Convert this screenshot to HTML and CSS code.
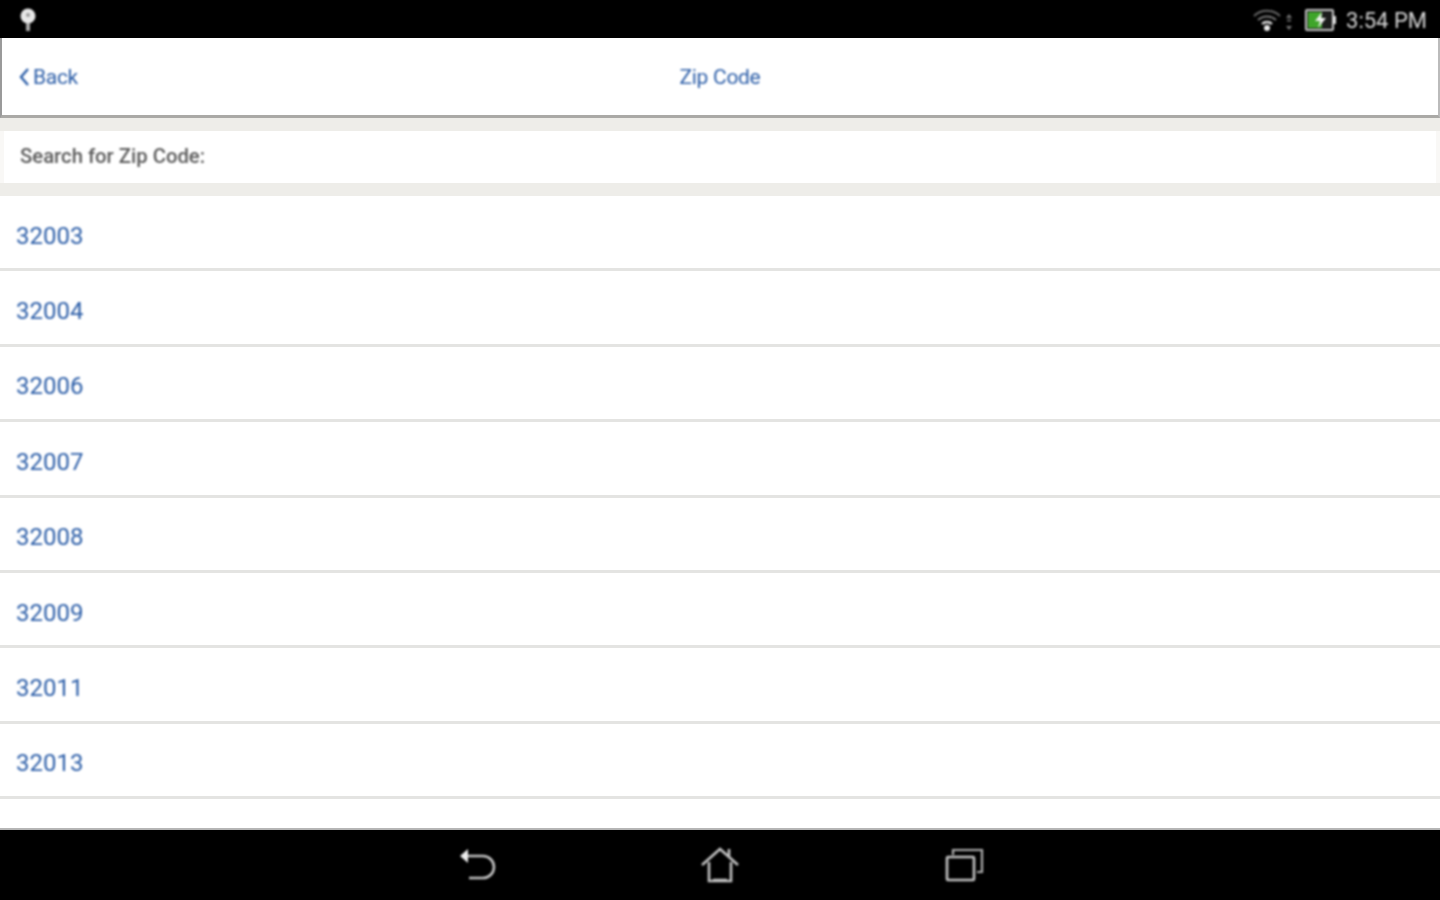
FILE: index.html
```html
<!DOCTYPE html>
<html lang="en">
<head>
  <meta charset="UTF-8">
  <title>Zip Code</title>
  <link rel="stylesheet" href="styles.css">
</head>
<body>

<!-- Status bar -->
<div class="status-bar">
  <svg class="status-pin soft" width="20" height="28" viewBox="0 0 20 28">
    <circle cx="10" cy="10" r="7.5" fill="#e8e8e8"/>
    <circle cx="10" cy="9" r="2" fill="#999"/>
    <rect x="8" y="17" width="4" height="8" fill="#aaa"/>
  </svg>
  <div class="status-right">
    <svg class="status-wifi soft" width="44" height="26" viewBox="0 0 44 26" fill="none">
      <path d="M2 9 A19 19 0 0 1 28 9" stroke="#666" stroke-width="2"/>
      <path d="M6 13 A13 13 0 0 1 24 13" stroke="#777" stroke-width="2"/>
      <path d="M10 17 A7 7 0 0 1 20 17" stroke="#ddd" stroke-width="2.5"/>
      <circle cx="15" cy="21" r="3" fill="#eee"/>
      <path d="M37 7 L40 11 H34 Z M37 23 L40 19 H34 Z" fill="#777"/>
      <rect x="35" y="12.5" width="4" height="2" fill="#666"/>
    </svg>
    <svg class="status-battery soft" width="32" height="22" viewBox="0 0 32 22">
      <rect x="1" y="1" width="27" height="20" rx="1" fill="#1c1c1c" stroke="#c8c8c8" stroke-width="2"/>
      <rect x="3" y="3" width="14" height="16" fill="#3fa52a"/>
      <path d="M17 3 L10 12 H15 L13 19 L21 9 H16 Z" fill="#f2f2f2"/>
      <rect x="28" y="7" width="3" height="8" fill="#ddd"/>
    </svg>
    <span class="status-time soft">3:54 PM</span>
  </div>
</div>

<!-- Header -->
<div class="header">
  <a class="back soft">
    <svg width="12" height="20" viewBox="0 0 12 20" fill="none">
      <path d="M10 2 L3 10 L10 18" stroke="#2c5ea8" stroke-width="2.4"/>
    </svg>
    Back
  </a>
  <div class="title soft">Zip Code</div>
</div>

<div class="search-wrap">
  <div class="search-label"><span class="soft">Search for Zip Code:</span></div>
</div>

<!-- Zip list -->
<ul class="zip-list">
  <li><span class="soft">32003</span></li>
  <li><span class="soft">32004</span></li>
  <li><span class="soft">32006</span></li>
  <li><span class="soft">32007</span></li>
  <li><span class="soft">32008</span></li>
  <li><span class="soft">32009</span></li>
  <li><span class="soft">32011</span></li>
  <li><span class="soft">32013</span></li>
</ul>

<!-- Nav bar -->
<div class="nav-bar">
  <svg class="nav-back soft" width="40" height="36" viewBox="0 0 40 36" fill="none">
    <path d="M4 9 H24 A11 11 0 0 1 24 31 H10" stroke="#c4c4c4" stroke-width="2.6"/>
    <path d="M1 9 L9 2 V16 Z" fill="#eee"/>
  </svg>
  <svg class="soft" width="40" height="40" viewBox="0 0 40 40" fill="none">
    <path d="M2 20 L20 4 L38 20 M29 11 V4" stroke="#c4c4c4" stroke-width="2.6"/>
    <path d="M9 17 V36 H31 V17 M13 35 H27" stroke="#c4c4c4" stroke-width="2.6"/>
  </svg>
  <svg class="soft" width="40" height="36" viewBox="0 0 40 36" fill="none">
    <rect x="2" y="10" width="27" height="23" rx="1" stroke="#c4c4c4" stroke-width="2.6"/>
    <path d="M8 8 V3 H37 V25 H32" stroke="#b0b0b0" stroke-width="2.2"/>
  </svg>
</div>

</body>
</html>
```

FILE: styles.css
```css
html, body {
  height: 100%;
}

body {
  margin: 0;
  font-family: Roboto, 'Liberation Sans', sans-serif;
  background: #fff;
  display: flex;
  flex-direction: column;
  height: 900px;
  overflow: hidden;
}

/* the reference is an upscaled capture, so text and icons are a bit soft */
.soft {
  filter: blur(0.8px);
}

.status-bar {
  height: 38px;
  flex: none;
  background: #000;
  display: flex;
  align-items: center;
  justify-content: space-between;
  padding: 0 13px 0 18px;
}

.status-pin {
  margin-top: 2px;
}

.status-right {
  display: flex;
  align-items: center;
}

.status-wifi {
  margin-right: 9px;
  margin-top: 2px;
}

.status-battery {
  margin-right: 9px;
  margin-top: 1px;
}

.status-time {
  color: #d4d4d4;
  font-size: 22px;
  margin-top: 2px;
}

.header {
  height: 77px;
  flex: none;
  display: flex;
  align-items: center;
  justify-content: center;
  position: relative;
  border-left: 2px solid #9a9a9a;
  border-right: 2px solid #bbb;
  border-bottom: 3px solid #aaa9a6;
  color: #2c5ea8;
  font-size: 21px;
  letter-spacing: -0.3px;
}

.back {
  position: absolute;
  left: 16px;
  top: 0;
  bottom: 0;
  display: flex;
  align-items: center;
  gap: 3px;
}

.search-wrap {
  flex: none;
  background: #eeede9;
  padding: 13px 0;
}

.search-label {
  height: 52px;
  box-sizing: border-box;
  background: #fff;
  border-left: 4px solid #f9f8f6;
  border-right: 4px solid #f9f8f6;
  padding: 0 0 2px 16px;
  display: flex;
  align-items: center;
  color: #5a5a5a;
  font-size: 20.3px;
  font-weight: 500;
}

.zip-list {
  list-style: none;
  margin: 0;
  padding: 0;
  flex: 1;
}

.zip-list li {
  height: 75.4px;
  box-sizing: border-box;
  border-bottom: 3px solid #e4e4e2;
  padding: 7px 0 0 16px;
  display: flex;
  align-items: center;
  color: #2c5ea8;
  font-size: 24px;
}

.nav-bar {
  height: 72px;
  flex: none;
  background: #000;
  border-top: 2px solid #b5b5b5;
  box-sizing: border-box;
  display: flex;
  align-items: center;
  justify-content: center;
  gap: 205px;
}

.nav-back {
  position: relative;
  left: 4px;
}
```
